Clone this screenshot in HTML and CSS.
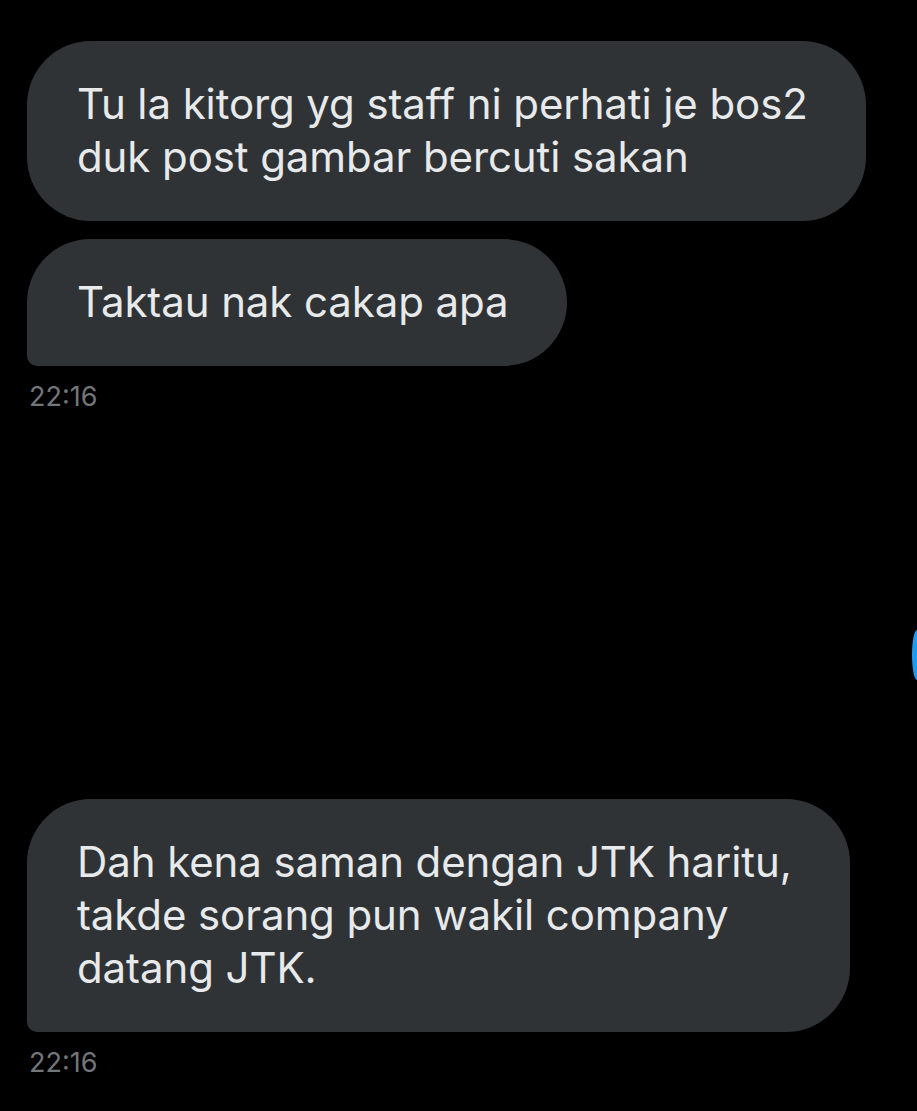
FILE: index.html
```html
<!DOCTYPE html>
<html>
<head>
<meta charset="utf-8">
<link rel="stylesheet" href="styles.css">
</head>
<body>
<div class="chat">
  <div class="group">
    <div class="bubble">Tu la kitorg yg staff ni perhati je bos2<br>duk post gambar bercuti sakan</div>
    <div class="bubble last">Taktau nak cakap apa</div>
    <div class="time">22:16</div>
  </div>
  <div class="group group-2">
    <div class="bubble last">Dah kena saman dengan JTK haritu,<br>takde sorang pun wakil company<br>datang JTK.</div>
    <div class="time">22:16</div>
  </div>
</div>
<div class="fab"></div>
</body>
</html>
```
FILE: styles.css
```css
html, body {
  margin: 0;
  padding: 0;
  background: #000;
  height: 100%;
  overflow: hidden;
}
body {
  font-family: Inter, "Noto Sans", sans-serif;
  position: relative;
}
.chat {
  padding: 41px 0 0 27px;
  display: flex;
  flex-direction: column;
}
.group {
  display: flex;
  flex-direction: column;
  align-items: flex-start;
  gap: 18px;
}
.group-2 {
  margin-top: 386px;
}
.bubble {
  background: #2f3336;
  color: #e7e9ea;
  font-size: 42px;
  line-height: 53px;
  padding: 36px 58px 38px 50px;
  border-radius: 64px;
  letter-spacing: -0.1px;
}
.bubble.last {
  border-bottom-left-radius: 10px;
}
.time {
  color: #71767b;
  font-size: 27px;
  line-height: 32px;
  margin-top: -3px;
  padding-left: 2px;
}
.fab {
  position: absolute;
  left: 912px;
  top: 630px;
  width: 5px;
  height: 50px;
  border-radius: 100% 0 0 100% / 50% 0 0 50%;
  background: #1d9bf0;
}
```
